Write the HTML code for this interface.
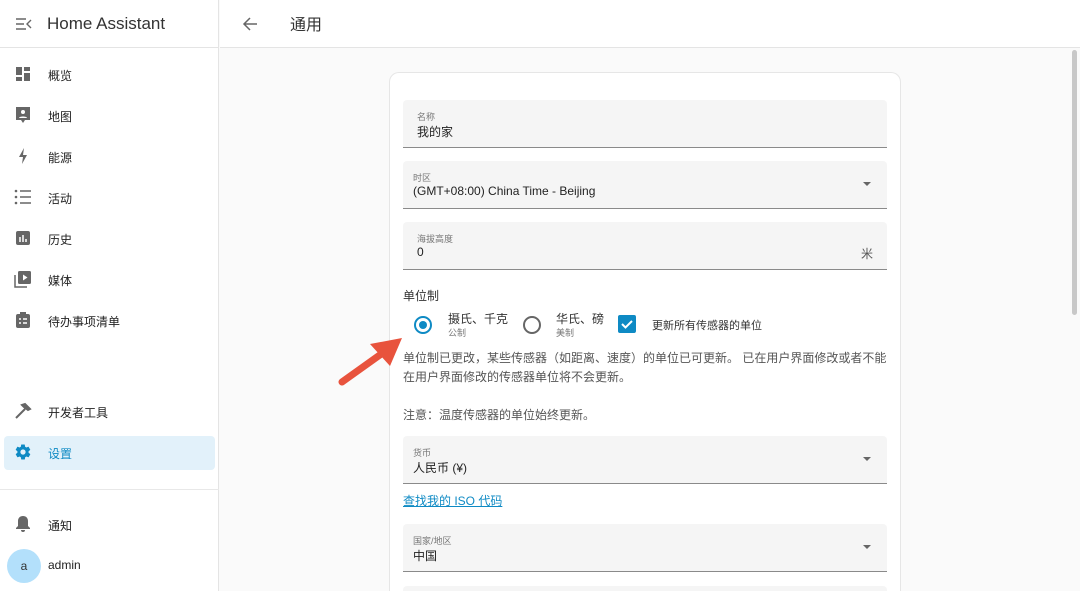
<!DOCTYPE html>
<html style="width:1080px;height:591px;overflow:hidden"><head><meta charset="utf-8"><style>
*{box-sizing:border-box;margin:0;padding:0}
body{width:1080px;height:591px;overflow:hidden;background:#fafafa;font-family:"Liberation Sans","Noto Sans CJK SC",sans-serif;color:#212121;position:relative}
.sb{position:absolute;left:0;top:0;width:219px;height:591px;background:#fff;border-right:1px solid #e4e4e4}
.hdr{height:48px;border-bottom:1px solid #e4e4e4;display:flex;align-items:center}
.hdr .t{position:absolute;left:47px;top:14px;font-size:17px;color:#333}
.it{position:absolute;left:0;width:219px;height:34px;font-size:12px;color:#222}
.it span{position:absolute;left:48px;top:9px}
.it svg{position:absolute;left:14px;top:7px}
.sel{left:4px;width:211px;background:#e2f1fa;border-radius:4px;color:#0e8ac4}
.sel span{left:44px}.sel svg{left:10px}
.top{position:absolute;left:220px;top:0;right:0;height:48px;background:#fff;border-bottom:1px solid #e4e4e4}
.card{position:absolute;left:389px;top:72px;width:512px;height:519px;background:#fff;border:1px solid #e6e6e6;border-bottom:none;border-radius:10px 10px 0 0}
.f{position:absolute;left:403px;width:484px;height:48px;background:#f5f5f5;border-bottom:1px solid #8a8a8a;border-radius:4px 4px 0 0}
.f .l{position:absolute;left:14px;top:10px;font-size:9px;color:#777}
.f .v{position:absolute;left:14px;top:23px;font-size:12px;color:#222}
.f .ar{position:absolute;right:16px;top:21px;width:0;height:0;border-left:4px solid transparent;border-right:4px solid transparent;border-top:4px solid #666}
.tx{position:absolute;font-size:12px;color:#555}
</style></head><body>
<div class="sb">
<div class="hdr">
<svg style="position:absolute;left:16px;top:17px" width="16" height="14" viewBox="0 0 16 14"><path d="M0 2h10M0 7h8M0 12h10M15 3l-4 4 4 4" stroke="#666" stroke-width="1.4" fill="none"/></svg>
<div class="t">Home Assistant</div></div>
<div class="it" style="top:58px"><svg width="18" height="18" viewBox="0 0 18 18"><path d="M2 2h6v8H2zM10 2h6v4h-6zM10 8h6v8h-6zM2 12h6v4H2z" fill="#666"/></svg><span>概览</span></div>
<div class="it" style="top:99px"><svg width="18" height="20" viewBox="0 0 18 20"><path d="M2 1h14v13h-5l-2 3-2-3H2z" fill="#666"/><circle cx="9" cy="6" r="2" fill="#fff"/><path d="M5 12c0-2 8-2 8 0z" fill="#fff"/></svg><span>地图</span></div>
<div class="it" style="top:140px"><svg width="18" height="18" viewBox="0 0 18 18"><path d="M10 1L5 10h4l-1 7 5-9H9z" fill="#666"/></svg><span>能源</span></div>
<div class="it" style="top:181px"><svg width="18" height="18" viewBox="0 0 18 18"><path d="M6 3h11M6 9h11M6 15h11" stroke="#666" stroke-width="1.4"/><circle cx="2" cy="3" r="1.3" fill="#666"/><circle cx="2" cy="9" r="1.3" fill="#666"/><circle cx="2" cy="15" r="1.3" fill="#666"/></svg><span>活动</span></div>
<div class="it" style="top:222px"><svg width="18" height="18" viewBox="0 0 18 18"><rect x="2" y="2" width="14" height="14" rx="2" fill="#666"/><path d="M6 13V8M9 13V6M12 13v-3" stroke="#fff" stroke-width="1.5"/></svg><span>历史</span></div>
<div class="it" style="top:263px"><svg width="18" height="18" viewBox="0 0 18 18"><path d="M1 5v12h12" stroke="#666" stroke-width="1.5" fill="none"/><rect x="4" y="1" width="13" height="13" rx="1.5" fill="#666"/><path d="M9 4.5v6l4.5-3z" fill="#fff"/></svg><span>媒体</span></div>
<div class="it" style="top:304px"><svg width="18" height="18" viewBox="0 0 18 18"><rect x="2" y="3" width="14" height="14" rx="2" fill="#666"/><rect x="6" y="1" width="6" height="3" fill="#666"/><path d="M5 8h2M9 8h4M5 12h2M9 12h4" stroke="#fff" stroke-width="1.4"/></svg><span>待办事项清单</span></div>
<div class="it" style="top:395px"><svg width="18" height="18" viewBox="0 0 18 18"><path d="M2 16L11 7M8 3l3-1 5 5-2 1-4-3z" stroke="#666" stroke-width="2" fill="#666"/></svg><span>开发者工具</span></div>
<div class="it sel" style="top:436px"><svg width="18" height="18" viewBox="0 0 24 24"><path fill="#0e8ac4" d="M12 15.5A3.5 3.5 0 1 1 12 8.5a3.5 3.5 0 0 1 0 7m7.4-2.5c.04-.3.06-.6.06-1s-.03-.7-.07-1l2.1-1.6c.2-.15.24-.4.12-.6l-2-3.5c-.12-.22-.38-.3-.6-.22l-2.5 1c-.5-.4-1.1-.7-1.700-1l-.4-2.6A.5.5 0 0 0 14 2h-4c-.25 0-.46.18-.5.42l-.37 2.650c-.63.25-1.17.6-1.7 1l-2.5-1c-.22-.09-.48 0-.6.22l-2 3.5c-.13.21-.07.46.12.6L4.57 11c-.04.3-.07.6-.07 1s.03.7.07 1l-2.1 1.6c-.2.15-.25.4-.12.6l2 3.5c.12.22.38.3.6.22l2.5-1c.52.4 1.06.74 1.69 1l.37 2.65c.04.24.25.42.5.42h4c.25 0 .46-.18.5-.42l.37-2.65c.63-.26 1.170-.6 1.7-1l2.48 1c.23.09.49 0 .61-.22l2-3.5c.12-.22.07-.47-.12-.6z"/></svg><span>设置</span></div>
<div style="position:absolute;left:0;top:489px;width:219px;border-top:1px solid #e8e8e8"></div>
<div class="it" style="top:508px"><svg width="18" height="18" viewBox="0 0 18 18"><path d="M9 1c-3 0-5 2-5 5v5l-2 2v1h14v-1l-2-2V6c0-3-2-5-5-5zM7 15h4a2 2 0 0 1-4 0z" fill="#666"/></svg><span>通知</span></div>
<div style="position:absolute;left:7px;top:549px;width:34px;height:34px;border-radius:50%;background:#b3e0fb;font-size:12px;color:#333;text-align:center;line-height:34px">a</div>
<div class="it" style="top:549px"><span>admin</span></div>
</div>
<div class="top">
<svg style="position:absolute;left:22px;top:16px" width="16" height="16" viewBox="0 0 16 16"><path d="M15 8H2M8 2L2 8l6 6" stroke="#666" stroke-width="1.5" fill="none"/></svg>
<div style="position:absolute;left:70px;top:11px;font-size:16px;color:#333">通用</div>
</div>
<div style="position:absolute;left:1072px;top:50px;width:5px;height:265px;background:#c8c8c8;border-radius:3px"></div>
<div class="card"></div>
<div class="f" style="top:100px"><div class="l">名称</div><div class="v">我的家</div></div>
<div class="f" style="top:161px"><div class="l" style="left:10px">时区</div><div class="v" style="left:10px">(GMT+08:00) China Time - Beijing</div><div class="ar"></div></div>
<div class="f" style="top:222px"><div class="l">海拔高度</div><div class="v">0</div><div style="position:absolute;right:14px;top:23px;font-size:12px;color:#555">米</div></div>
<div class="tx" style="left:403px;top:287px;color:#333">单位制</div>
<div style="position:absolute;left:414px;top:316px;width:18px;height:18px;border:2px solid #0e8ac4;border-radius:50%"><div style="position:absolute;left:3px;top:3px;width:8px;height:8px;border-radius:50%;background:#0e8ac4"></div></div>
<div class="tx" style="left:448px;top:310px;color:#333">摄氏、千克</div>
<div class="tx" style="left:448px;top:326px;font-size:9px;color:#777">公制</div>
<div style="position:absolute;left:523px;top:316px;width:18px;height:18px;border:2px solid #666;border-radius:50%"></div>
<div class="tx" style="left:556px;top:310px;color:#333">华氏、磅</div>
<div class="tx" style="left:556px;top:326px;font-size:9px;color:#777">美制</div>
<div style="position:absolute;left:618px;top:315px;width:18px;height:18px;background:#0e8ac4;border-radius:2px"><svg width="18" height="18" viewBox="0 0 18 18"><path d="M4 9l3.5 3.5L14 6" stroke="#fff" stroke-width="2" fill="none"/></svg></div>
<div class="tx" style="left:652px;top:317px;font-size:11px;color:#333">更新所有传感器的单位</div>
<div class="tx" style="left:403px;top:349px;line-height:19px">单位制已更改，某些传感器（如距离、速度）的单位已可更新。 已在用户界面修改或者不能<br>在用户界面修改的传感器单位将不会更新。</div>
<div class="tx" style="left:403px;top:406px">注意：温度传感器的单位始终更新。</div>
<svg style="position:absolute;left:336px;top:336px" width="72" height="52" viewBox="0 0 72 52"><path d="M6 46L48 16" stroke="#e8533d" stroke-width="7" stroke-linecap="round"/><path d="M34 8L66 2 54 30z" fill="#e8533d"/></svg>
<div class="f" style="top:436px"><div class="l" style="left:10px">货币</div><div class="v" style="left:10px">人民币 (¥)</div><div class="ar"></div></div>
<div class="tx" style="left:403px;top:492px;color:#0e8ac4;text-decoration:underline">查找我的 ISO 代码</div>
<div class="f" style="top:524px"><div class="l" style="left:10px">国家/地区</div><div class="v" style="left:10px">中国</div><div class="ar"></div></div>
<div class="f" style="top:586px;height:5px;border:none"></div>
</body></html>
